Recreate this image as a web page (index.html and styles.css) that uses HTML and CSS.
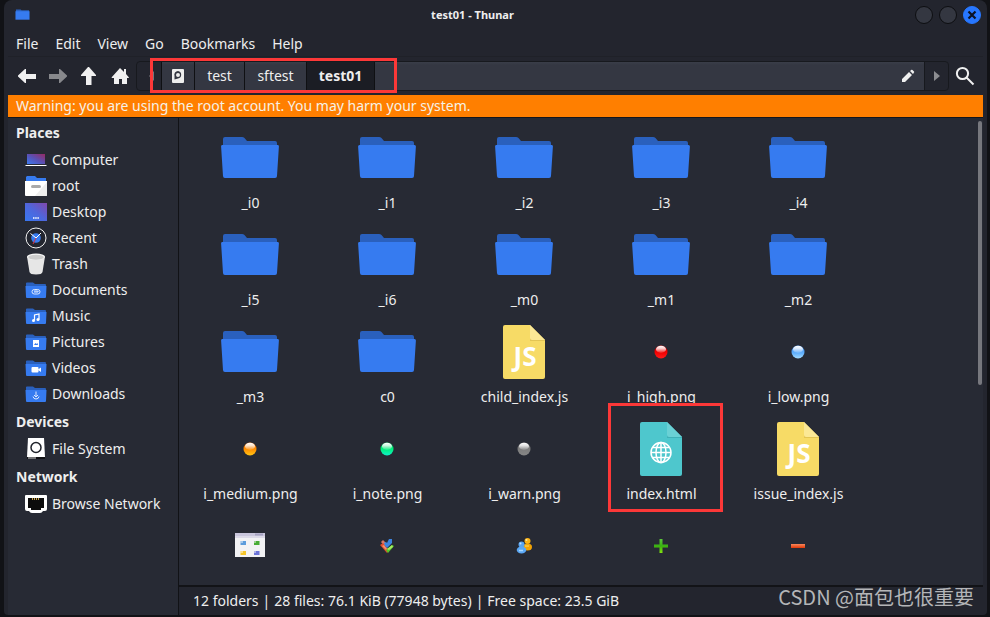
FILE: index.html
```html
<!DOCTYPE html>
<html lang="en">
<head>
<meta charset="utf-8">
<title>test01 - Thunar</title>
<link rel="stylesheet" href="styles.css">
</head>
<body>
<svg class="defs" width="0" height="0" aria-hidden="true">
  <defs>
    <linearGradient id="g-screen" x1="0" y1="1" x2="1" y2="0"><stop offset="0" stop-color="#3a7af0"/><stop offset=".5" stop-color="#5a50b4"/><stop offset="1" stop-color="#962a62"/></linearGradient>
    <linearGradient id="g-desk" x1="0" y1="1" x2="1" y2="0"><stop offset="0" stop-color="#3878f0"/><stop offset=".5" stop-color="#4f66dc"/><stop offset="1" stop-color="#8048ac"/></linearGradient>
    <linearGradient id="g-red" x1="0" y1="0" x2="0" y2="1"><stop offset="0" stop-color="#d80000"/><stop offset=".5" stop-color="#f00000"/><stop offset="1" stop-color="#ff1c1c"/></linearGradient>
    <linearGradient id="g-blue" x1="0" y1="0" x2="0" y2="1"><stop offset="0" stop-color="#3a8cf0"/><stop offset=".6" stop-color="#62b0fc"/><stop offset="1" stop-color="#a4dcff"/></linearGradient>
    <linearGradient id="g-orange" x1="0" y1="0" x2="0" y2="1"><stop offset="0" stop-color="#f06c00"/><stop offset=".5" stop-color="#ff8c00"/><stop offset="1" stop-color="#ffc414"/></linearGradient>
    <linearGradient id="g-green" x1="0" y1="0" x2="0" y2="1"><stop offset="0" stop-color="#00c85c"/><stop offset=".5" stop-color="#00f07c"/><stop offset="1" stop-color="#10f0c8"/></linearGradient>
    <linearGradient id="g-gray" x1="0" y1="0" x2="0" y2="1"><stop offset="0" stop-color="#747474"/><stop offset="1" stop-color="#868686"/></linearGradient>
    <linearGradient id="g-shine" x1="0" y1="0" x2="0" y2="1"><stop offset="0" stop-color="#fff"/><stop offset=".4" stop-color="#fff" stop-opacity=".8"/><stop offset="1" stop-color="#fff" stop-opacity=".1"/></linearGradient>
    <linearGradient id="g-plus" x1="0" y1="0" x2="0" y2="1"><stop offset="0" stop-color="#5cc83c"/><stop offset=".5" stop-color="#38b010"/><stop offset="1" stop-color="#84e410"/></linearGradient>
    <linearGradient id="g-minus" x1="0" y1="0" x2="0" y2="1"><stop offset="0" stop-color="#f8885c"/><stop offset="1" stop-color="#e03808"/></linearGradient>
  </defs>
  <symbol id="folder" viewBox="0 0 64 64">
    <path fill="#2a60bd" d="M5 20V13Q5 11 7 11H24Q25.500 11 26.500 12L29 15H57Q59 15 59 17V24H5Z"/>
    <path fill="#367bf0" d="M4.500 19H59.500Q61 19 60.900 20.500L59 50Q59 52 57 52H7Q5 52 5 50L3.100 20.500Q3 19 4.500 19Z"/>
  </symbol>
  <symbol id="file-js" viewBox="0 0 64 64">
    <path fill="#f7db66" d="M13 5H38L53 20V57Q53 59 51 59H13Q11 59 11 57V7Q11 5 13 5Z"/>
    <path fill="#e3c554" d="M38 18V21H53V20Z"/>
    <path fill="#fbe895" d="M38 5L53 20H40Q38 20 38 18Z"/>
  </symbol>
  <symbol id="file-html" viewBox="0 0 64 64">
    <path fill="#4ec7cd" d="M13 5H38L53 20V57Q53 59 51 59H13Q11 59 11 57V7Q11 5 13 5Z"/>
    <path fill="#3fb1b8" d="M38 18V21H53V20Z"/>
    <path fill="#6ad1d5" d="M38 5L53 20H40Q38 20 38 18Z"/>
    <g fill="none" stroke="#fff" stroke-width="1.500"><circle cx="32" cy="35.500" r="10"/><ellipse cx="32" cy="35.500" rx="5" ry="10"/><path d="M32 25.500V45.500M22 35.500H42M24 30.500H40M24 40.500H40"/></g>
  </symbol>
  <symbol id="shine" viewBox="0 0 64 64"><ellipse cx="32" cy="29.300" rx="5" ry="3.600" fill="url(#g-shine)"/></symbol>
  <symbol id="place-folder" viewBox="0 0 22 22">
    <path fill="#2a60bd" d="M1 8V4Q1 3.500 2 3.500H8L10 5H20Q21 5 21 6V9H1Z"/>
    <path fill="#367bf0" d="M.500 7H21.500L21 18Q21 19 20 19H2Q1 19 1 18Z"/>
  </symbol>
</svg>

<div class="window">
  <header class="titlebar">
    <svg class="app-icon" viewBox="0 0 16 12" aria-hidden="true"><path fill="#2a60bd" d="M1 0H6L7 1H15V4H1Z"/><path fill="#367bf0" d="M.500 2H15.500V11H.500Z"/></svg>
    <h1 class="title">test01 - Thunar</h1>
    <div class="window-buttons">
      <button class="wbtn" aria-label="Minimize"></button>
      <button class="wbtn" aria-label="Maximize"></button>
      <button class="wbtn wbtn-close" aria-label="Close"><svg viewBox="0 0 16 16" aria-hidden="true"><path d="M4.500 4.500L11.500 11.500M11.500 4.500L4.500 11.500" stroke="#0b1224" stroke-width="2.200"/></svg></button>
    </div>
  </header>

  <nav class="menubar">
    <button>File</button><button>Edit</button><button>View</button><button>Go</button><button>Bookmarks</button><button>Help</button>
  </nav>

  <div class="toolbar">
    <button class="tool" aria-label="Back"><svg viewBox="0 0 20 20"><path fill="#f0f0f0" d="M9 3V8H19V13H9V17L8 17L1 10.500L1 9.500L8 3Z"/></svg></button>
    <button class="tool" aria-label="Forward"><svg viewBox="0 0 20 20"><path fill="#87888c" d="M11 3V8H1V13H11V17L12 17L19 10.500V9.500L12 3Z"/></svg></button>
    <button class="tool" aria-label="Up"><svg viewBox="0 0 20 20"><path fill="#f0f0f0" d="M9 1H10L17 9V10H12.500V19H7V10H2V9Z"/></svg></button>
    <button class="tool" aria-label="Home"><svg viewBox="0 0 20 20"><path fill="#f0f0f0" d="M10 2L14 6V3H16V8L19 11.500L18.500 12H17V18H12V13H9V18H4V12H2L1.500 11.500Z"/></svg></button>
    <div class="pathbar">
      <button class="step" aria-label="Scroll left"><svg viewBox="0 0 6 10"><path fill="#75777d" d="M6 0V10L1 5Z"/></svg></button>
      <button class="crumb crumb-disk" aria-label="File System"><svg viewBox="0 0 12 14"><path fill="#eee" fill-rule="evenodd" d="M1 0H11Q12 0 12 1V13Q12 14 11 14H1Q0 14 0 13V1Q0 0 1 0ZM6 2A3.800 3.800 0 0 0 2.500 7L2.500 10.500L6 9.500A3.800 3.800 0 0 0 6 2ZM6 4A2 2 0 1 1 6 8A2 2 0 0 1 6 4Z"/></svg></button>
      <button class="crumb crumb-a">test</button>
      <button class="crumb crumb-b">sftest</button>
      <button class="crumb crumb-current">test01</button>
      <button class="path-rest" aria-label="Edit location"><svg viewBox="0 0 14 14"><path fill="#f0f0f0" d="M1 10L8 3L11 6L4 13H1ZM9 2L10.500 .800Q11 .500 11.500 1L13 2.500Q13.500 3 13 3.500L12 5Z"/></svg></button>
      <button class="step step-right" aria-label="Scroll right"><svg viewBox="0 0 6 10"><path fill="#8b8c90" d="M0 0V10L6 5Z"/></svg></button>
      <span class="mark mark-path"></span>
    </div>
    <button class="search" aria-label="Search"><svg viewBox="0 0 20 20"><g fill="none" stroke="#f0f0f0" stroke-width="2"><circle cx="7.500" cy="7.500" r="5.600"/><path d="M11.500 11.500L18.500 18.500"/></g></svg></button>
  </div>

  <p class="warning">Warning: you are using the root account. You may harm your system.</p>

  <div class="content">
    <aside class="sidebar">
      <h2>Places</h2>
      <ul>
        <li><a href="#"><svg viewBox="0 0 22 22"><path fill="url(#g-screen)" d="M2 5H20V15H2Z"/><path fill="#fff" d="M.500 16H21.500V17H.500Z"/></svg>Computer</a></li>
        <li><a href="#"><svg viewBox="0 0 22 22"><path fill="#367bf0" d="M1 6V2L2 1H10L12 3H21V7H1Z"/><path fill="#fff" d="M0 6H22V20Q22 21 21 21H1Q0 21 0 20Z"/><path fill="#eee" d="M22 7V20Q22 21 21 21H10Z"/><rect x="6" y="10" width="10" height="3" rx="1.500" fill="#aaa"/></svg>root</a></li>
        <li><a href="#"><svg viewBox="0 0 22 22"><rect y="2" width="22" height="18" fill="url(#g-desk)"/><path stroke="#fff" stroke-width="1.500" stroke-dasharray="1.500 .700" d="M8 17H14"/></svg>Desktop</a></li>
        <li><a href="#"><svg viewBox="0 0 22 22"><circle cx="11" cy="11" r="10" fill="#22252f" stroke="#f2f2f2"/><circle cx="11" cy="11" r="4.800" fill="#367bf0"/><path fill="none" stroke="#fff" d="M5.500 6.500L11 11L16 6"/><path stroke="#e03040" d="M11 11L8 17"/></svg>Recent</a></li>
        <li><a href="#"><svg viewBox="0 0 22 22"><path fill="#e6e6e6" d="M2 3.500H20L17.500 19Q17 21.500 11 21.500T4.500 19Z"/><ellipse cx="11" cy="3.800" rx="9" ry="3.300" fill="#f5f5f5"/><ellipse cx="11" cy="4.200" rx="7.800" ry="2.500" fill="#ccc"/></svg>Trash</a></li>
        <li><a href="#"><svg viewBox="0 0 22 22"><use href="#place-folder"/><g fill="none" stroke="#dce8ff"><rect x="7" y="10.500" width="8" height="4.500" rx="2.250"/><path d="M9 13H13Q14 12 12 12H9"/></g></svg>Documents</a></li>
        <li><a href="#"><svg viewBox="0 0 22 22"><use href="#place-folder"/><path fill="none" stroke="#fff" stroke-width="1.200" d="M9.500 15.500V10L14 9V14.500"/><circle cx="8.500" cy="15.500" r="1.500" fill="#fff"/><circle cx="13" cy="14.500" r="1.500" fill="#fff"/></svg>Music</a></li>
        <li><a href="#"><svg viewBox="0 0 22 22"><use href="#place-folder"/><rect x="8" y="9" width="6" height="7" fill="#fff"/><path fill="#367bf0" d="M9 14L10.500 12L11.500 13L12.500 12L13 14Z"/></svg>Pictures</a></li>
        <li><a href="#"><svg viewBox="0 0 22 22"><use href="#place-folder"/><rect x="6.500" y="10" width="7" height="5.500" rx="1" fill="#fff"/><path fill="#fff" d="M13 12.500L16 10.500V15L13 13Z"/></svg>Videos</a></li>
        <li><a href="#"><svg viewBox="0 0 22 22"><use href="#place-folder"/><path fill="none" stroke="#dce8ff" d="M11 8.500V14M9 12L11 14L13 12M8 13.500Q8.500 16 11 16T14 13.500"/></svg>Downloads</a></li>
      </ul>
      <h2>Devices</h2>
      <ul>
        <li><a href="#"><svg viewBox="0 0 22 22"><path fill="#fff" d="M3 0H19L20 19H2Z"/><path fill="#101114" d="M2 19H20V21H2Z"/><path fill="#ddd" d="M3 19.500H11V20.500H3Z"/><circle cx="11" cy="9.500" r="5" fill="#fff" stroke="#20232b" stroke-width="1.500"/></svg>File System</a></li>
      </ul>
      <h2>Network</h2>
      <ul>
        <li><a href="#"><svg viewBox="0 0 22 22"><path fill="#fff" d="M1 2H21Q22 2 22 3V16Q22 18 20 18H18Q17 20 15 20H7Q5 20 4 18H2Q0 18 0 16V3Q0 2 1 2Z"/><path fill="#0c0c0c" d="M3 5H19V15H16V17H6V15H3Z"/><path stroke="#c7a24a" stroke-dasharray="1 1" stroke-width="2" d="M7 6H15"/></svg>Browse Network</a></li>
      </ul>
    </aside>

    <main class="pane">
      <div class="view">
        <ul class="grid">
          <li><svg viewBox="0 0 64 64"><use href="#folder"/></svg><span>_i0</span></li>
          <li><svg viewBox="0 0 64 64"><use href="#folder"/></svg><span>_i1</span></li>
          <li><svg viewBox="0 0 64 64"><use href="#folder"/></svg><span>_i2</span></li>
          <li><svg viewBox="0 0 64 64"><use href="#folder"/></svg><span>_i3</span></li>
          <li><svg viewBox="0 0 64 64"><use href="#folder"/></svg><span>_i4</span></li>
          <li><svg viewBox="0 0 64 64"><use href="#folder"/></svg><span>_i5</span></li>
          <li><svg viewBox="0 0 64 64"><use href="#folder"/></svg><span>_i6</span></li>
          <li><svg viewBox="0 0 64 64"><use href="#folder"/></svg><span>_m0</span></li>
          <li><svg viewBox="0 0 64 64"><use href="#folder"/></svg><span>_m1</span></li>
          <li><svg viewBox="0 0 64 64"><use href="#folder"/></svg><span>_m2</span></li>
          <li><svg viewBox="0 0 64 64"><use href="#folder"/></svg><span>_m3</span></li>
          <li><svg viewBox="0 0 64 64"><use href="#folder"/></svg><span>c0</span></li>
          <li><svg viewBox="0 0 64 64"><use href="#file-js"/><text class="file-tag" x="33" y="46" text-anchor="middle">JS</text></svg><span>child_index.js</span></li>
          <li><svg viewBox="0 0 64 64"><circle cx="32" cy="32" r="6.500" fill="url(#g-red)"/><use href="#shine"/></svg><span>i_high.png</span></li>
          <li><svg viewBox="0 0 64 64"><circle cx="32" cy="32" r="6.500" fill="url(#g-blue)"/><use href="#shine"/></svg><span>i_low.png</span></li>
          <li><svg viewBox="0 0 64 64"><circle cx="32" cy="32" r="6.500" fill="url(#g-orange)"/><use href="#shine"/></svg><span>i_medium.png</span></li>
          <li><svg viewBox="0 0 64 64"><circle cx="32" cy="32" r="6.500" fill="url(#g-green)"/><use href="#shine"/></svg><span>i_note.png</span></li>
          <li><svg viewBox="0 0 64 64"><circle cx="32" cy="32" r="6.500" fill="url(#g-gray)"/><use href="#shine"/></svg><span>i_warn.png</span></li>
          <li class="marked"><svg viewBox="0 0 64 64"><use href="#file-html"/></svg><span>index.html</span><i class="mark mark-file"></i></li>
          <li><svg viewBox="0 0 64 64"><use href="#file-js"/><text class="file-tag" x="33" y="46" text-anchor="middle">JS</text></svg><span>issue_index.js</span></li>
          <li><svg viewBox="0 0 64 64"><path fill="#f2f2f4" d="M17 19H47V43H17Z"/><path fill="#c9c6dc" d="M17 19H47V22H17Z"/><path fill="#a5a2c0" d="M37 19.500H45V21.500H37Z"/><path fill="#dcdae8" d="M17 22H47V24H17Z"/><path fill="#5c9cdc" d="M22.500 27H28V31H22.500Z"/><path fill="#48ac34" d="M36 27H41.500V31H36Z"/><path fill="#f4c428" d="M22.500 37H28V41H22.500Z"/><path fill="#6c74d8" d="M36 37H41.500V41H36Z"/><path fill="#fff" fill-opacity=".45" d="M22.500 27H25V29H22.500ZM36 27H38V29H36ZM22.500 37H25V39H22.500ZM36 37H38V39H36Z"/></svg></li>
          <li><svg viewBox="0 0 64 64"><path fill="#d87868" d="M26 28L28 26L32 30L30 33Z"/><path fill="#e04c2c" d="M25 31L28 29L34 36L32 39Z"/><path fill="#f49070" d="M27 32L29 31L32 35L31 36Z"/><path fill="#3c84e0" d="M29 29L31 28L32 29L34 25H37V29L32 34L30 32Z"/><path fill="#54c828" d="M31 36L37 31L39 32L33 39Z"/><path fill="#a8ec64" d="M32 35L37 31L38 33L34 36Z"/></svg></li>
          <li><svg viewBox="0 0 64 64"><circle cx="35.500" cy="27" r="3" fill="#fcb414"/><ellipse cx="35.500" cy="33" rx="4.500" ry="3.500" fill="#f4a404"/><circle cx="34.500" cy="26" r="1" fill="#ffe69c"/><path stroke="#ffdc64" d="M33 32H37"/><circle cx="29.500" cy="30.500" r="3" fill="#58a4f0"/><ellipse cx="29.500" cy="36" rx="4.800" ry="3.500" fill="#5ca8f4"/><circle cx="28.500" cy="29.500" r="1" fill="#c0e0ff"/><path stroke="#a8d8ff" stroke-width="1.500" d="M27 36.500H31"/></svg></li>
          <li><svg viewBox="0 0 64 64"><path fill="url(#g-plus)" d="M30.500 25H33.500V30.500H39V33.500H33.500V39H30.500V33.500H25V30.500H30.500Z"/></svg></li>
          <li><svg viewBox="0 0 64 64"><rect x="25" y="30" width="14" height="4" fill="url(#g-minus)"/></svg></li>
        </ul>
        <div class="scrollbar"><div class="thumb"></div></div>
      </div>
      <footer class="status"><span>12 folders</span><span>|</span><span>28 files: 76.1 KiB (77948 bytes)</span><span>|</span><span>Free space: 23.5 GiB</span></footer>
    </main>
  </div>
</div>
<div class="watermark">CSDN @面包也很重要</div>
</body>
</html>
```
FILE: styles.css
```css
* { box-sizing: border-box; }

body {
  margin: 0;
  height: 100vh;
  padding: 0 3px 2px 4px;
  overflow: hidden;
  background: #111216;
  color: #eeeeee;
  font: 14px/20px "Noto Sans", sans-serif;
}

button {
  margin: 0;
  padding: 0;
  border: 0;
  background: none;
  color: inherit;
  font: inherit;
}

ul { margin: 0; padding: 0; list-style: none; }
svg { display: block; flex: none; }
.defs { position: absolute; }

.window {
  display: flex;
  flex-direction: column;
  height: 100%;
  padding: 0 4px;
  border-radius: 8px 8px 4px 4px;
  background: #23252e;
}

.titlebar {
  display: flex;
  align-items: center;
  height: 30px;
  padding: 0 2px 0 7px;
}
.app-icon { width: 15px; height: 12px; }
.title { flex: 1; margin: 0; font-size: 11px; line-height: 20px; font-weight: 700; text-align: center; }
.window-buttons { display: flex; gap: 6px; }
.wbtn {
  width: 18px;
  height: 18px;
  border: 1px solid #0d0e11;
  border-radius: 50%;
  background: #343741;
}
.wbtn-close { border-color: #2777ff; background: #2777ff; }

.menubar {
  display: flex;
  gap: 17px;
  height: 27px;
  padding: 1px 8px 0;
  border-bottom: 1px solid #1f2128;
}

.toolbar { display: flex; align-items: center; height: 38px; padding-left: 3px; }
.tool { display: grid; place-items: center; width: 31px; height: 30px; }
.tool svg, .search svg { width: 20px; height: 20px; }

.pathbar {
  position: relative;
  display: flex;
  flex: 1;
  height: 30px;
  margin-left: 1px;
  border: 1px solid #17191e;
  border-radius: 4px;
}
.pathbar svg { margin: auto; }
.step { width: 24px; }
.step svg { width: 6px; height: 10px; }
.step:first-child svg { margin-right: 7px; }
.step-right { border-left: 1px solid #17191e; }
.crumb, .path-rest {
  border-left: 1px solid #0f1013;
  background: linear-gradient(#3a3e49, #343742 3px);
}
.crumb-disk { width: 33px; }
.crumb-disk svg { width: 12px; height: 14px; }
.crumb-a { width: 50px; }
.crumb-b { width: 62px; }
.crumb-current { width: 68px; background: #1b1d24; font-weight: 700; }
.path-rest { display: flex; flex: 1; padding-right: 9px; }
.path-rest svg { width: 14px; height: 14px; margin-right: 0; }
.search { display: grid; place-items: center; width: 31px; height: 30px; margin-right: 3px; }

.mark { position: absolute; border: 3px solid #fc3838; pointer-events: none; }
.mark-path { top: -4px; left: 13px; width: 247px; height: 35px; }
.mark-file { top: -14px; left: 15px; width: 115px; height: 109px; }

.warning {
  margin: 0;
  padding: 0 8px;
  background: #ff7f00;
  color: #f6f1e6;
  line-height: 22px;
}

.content {
  display: flex;
  flex: 1;
  min-height: 0;
  border-top: 1px solid #15161a;
  background: #272a34;
}

.sidebar { width: 171px; flex: none; border-right: 1px solid #111216; }
.sidebar h2 { margin: 0; padding-left: 8px; font-size: 14px; line-height: 29px; font-weight: 700; }
.sidebar a {
  display: flex;
  align-items: center;
  gap: 5px;
  height: 26px;
  padding-left: 17px;
  color: inherit;
  text-decoration: none;
}
.sidebar svg { width: 22px; height: 22px; }

.pane { display: flex; flex: 1; flex-direction: column; min-width: 0; }
.view { display: flex; flex: 1; min-height: 0; overflow: hidden; }
.grid {
  display: grid;
  flex: 1;
  grid-template-columns: repeat(auto-fill, 137px);
  grid-auto-rows: 97px;
  padding: 8px 0 0 3px;
}
.grid li { display: flex; flex-direction: column; align-items: center; line-height: 26px; }
.grid svg { width: 64px; height: 64px; margin-right: 1px; }
.marked { position: relative; }
.file-tag { fill: #ffffff; font: 700 26px "Liberation Sans Narrow", "Open Sans", sans-serif; }

.scrollbar { width: 5px; padding-top: 3px; }
.thumb { width: 4px; height: 57%; border-radius: 2px; background: #77787e; }

.status {
  display: flex;
  gap: 4px;
  height: 30px;
  padding-left: 14px;
  border-top: 2px solid #121317;
  background: #23252e;
  line-height: 28px;
}

.watermark {
  position: absolute;
  right: 16px;
  bottom: 6px;
  color: #b4b5b8;
  font: 20px/28px "Noto Sans CJK SC", sans-serif;
}
```
